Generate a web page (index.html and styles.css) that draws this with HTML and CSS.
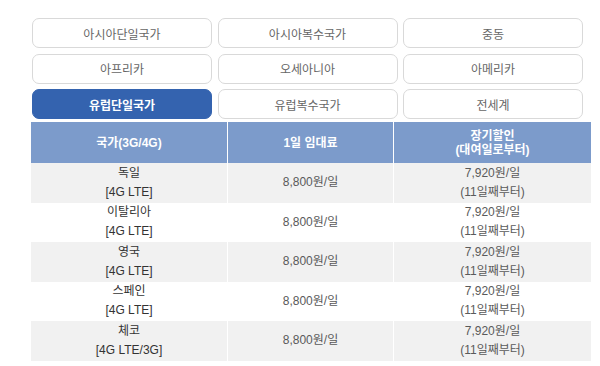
FILE: index.html
```html
<!DOCTYPE html>
<html lang="ko">
<head>
<meta charset="utf-8">
<link rel="stylesheet" href="styles.css">
</head>
<body>
<div class="page">
  <div class="tabs">
    <div class="tab">아시아단일국가</div>
    <div class="tab">아시아복수국가</div>
    <div class="tab">중동</div>
    <div class="tab">아프리카</div>
    <div class="tab">오세아니아</div>
    <div class="tab">아메리카</div>
    <div class="tab active">유럽단일국가</div>
    <div class="tab">유럽복수국가</div>
    <div class="tab">전세계</div>
  </div>
  <table class="rates">
    <thead>
      <tr>
        <th class="c1">국가(3G/4G)</th>
        <th class="c2">1일 임대료</th>
        <th class="c3">장기할인<br>(대여일로부터)</th>
      </tr>
    </thead>
    <tbody>
      <tr class="odd"><td>독일<br>[4G LTE]</td><td>8,800원/일</td><td>7,920원/일<br>(11일째부터)</td></tr>
      <tr><td>이탈리아<br>[4G LTE]</td><td>8,800원/일</td><td>7,920원/일<br>(11일째부터)</td></tr>
      <tr class="odd"><td>영국<br>[4G LTE]</td><td>8,800원/일</td><td>7,920원/일<br>(11일째부터)</td></tr>
      <tr><td>스페인<br>[4G LTE]</td><td>8,800원/일</td><td>7,920원/일<br>(11일째부터)</td></tr>
      <tr class="odd"><td>체코<br>[4G LTE/3G]</td><td>8,800원/일</td><td>7,920원/일<br>(11일째부터)</td></tr>
    </tbody>
  </table>
</div>
</body>
</html>
```
FILE: styles.css
```css
html, body {
  margin: 0;
  padding: 0;
  background: #ffffff;
}
body {
  font-family: "Liberation Sans", "Noto Sans CJK KR", sans-serif;
  font-size: 12px;
  color: #5a5a5a;
}
.page {
  padding: 18px 0 0 31px;
}
.tabs {
  display: grid;
  grid-template-columns: 180px 180px 180px;
  column-gap: 5.5px;
  row-gap: 5.5px;
  margin-left: 1px;
}
.tab {
  box-sizing: border-box;
  height: 30px;
  border: 1px solid #d9d9d9;
  border-radius: 7px;
  display: flex;
  align-items: center;
  justify-content: center;
  color: #666666;
  background: #ffffff;
}
.tab.active {
  background: #3463af;
  border-color: #3463af;
  color: #ffffff;
  font-weight: bold;
}
.rates {
  margin-top: 3px;
  border-collapse: collapse;
  table-layout: fixed;
  width: 558px;
}
.rates th {
  background: #7c9bcb;
  color: #ffffff;
  font-weight: bold;
  height: 41px;
  line-height: 14px;
  padding: 0;
  text-align: center;
  border-left: 1px solid #ffffff;
}
.rates th.c1 { width: 196px; border-left: none; }
.rates th.c2 { width: 165px; }
.rates th.c3 { width: 197px; }
.rates td {
  height: 39.5px;
  line-height: 19px;
  padding: 0;
  text-align: center;
  border-left: 1px solid #ffffff;
}
.rates td:first-child {
  border-left: none;
  color: #333333;
}
.rates tr.odd td {
  background: #f1f1f1;
}
```
